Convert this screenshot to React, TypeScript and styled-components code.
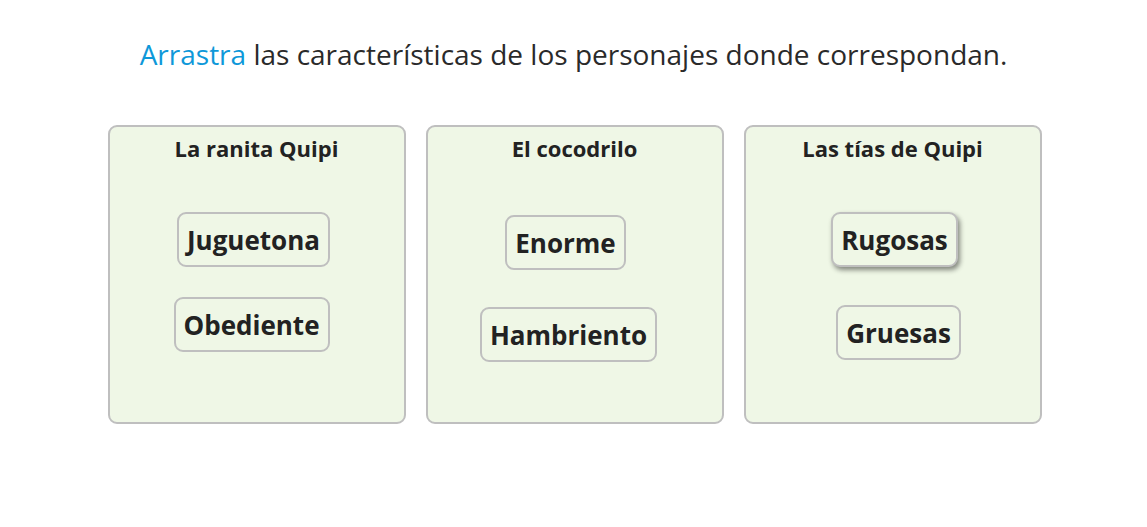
import React from "react";
import styled, { createGlobalStyle } from "styled-components";

const Global = createGlobalStyle`
  html, body { margin: 0; padding: 0; background: #ffffff; }
  body { font-family: "Open Sans", "Noto Sans", sans-serif; color: #222222; }
`;

const Page = styled.div`
  width: 1147px;
  display: flex;
  flex-direction: column;
  align-items: center;
  padding-top: 35px;
`;

const Instruction = styled.p`
  margin: 0;
  font-size: 28px;
  line-height: 38px;
  font-weight: 400;
  color: #2a2a2a;
  letter-spacing: 0;
`;

const Accent = styled.span`
  color: #0e98d9;
`;

const Board = styled.div`
  display: flex;
  gap: 20px;
  margin-top: 52px;
  margin-left: 2px;
`;

const Zone = styled.div`
  box-sizing: border-box;
  width: 298px;
  height: 299px;
  border: 2px solid #bfbfbf;
  border-radius: 9px;
  background: #eff7e6;
  display: flex;
  flex-direction: column;
  align-items: center;
`;

const ZoneTitle = styled.h3`
  margin: 7px 0 0;
  font-size: 22px;
  line-height: 28px;
  font-weight: 700;
  color: #222222;
`;

const ChipStack = styled.div`
  display: flex;
  flex-direction: column;
  align-items: center;
  width: 100%;
`;

const Chip = styled.div<{ $mt: number; $dx: number; $lift?: boolean }>`
  box-sizing: border-box;
  height: 55px;
  margin-top: ${(p) => p.$mt}px;
  transform: translateX(${(p) => p.$dx}px);
  padding: 0 8px;
  display: flex;
  align-items: center;
  border: 2px solid #bfbfbf;
  border-radius: 9px;
  background: #eff7e6;
  font-size: 26px;
  font-weight: 700;
  color: #222222;
  box-shadow: ${(p) => (p.$lift ? "2px 3px 5px rgba(0,0,0,0.45)" : "none")};
`;

type ChipData = { label: string; mt: number; dx: number; lift?: boolean };
type ZoneData = { title: string; chips: ChipData[] };

const zones: ZoneData[] = [
  {
    title: "La ranita Quipi",
    chips: [
      { label: "Juguetona", mt: 50, dx: -3 },
      { label: "Obediente", mt: 30, dx: -5 },
    ],
  },
  {
    title: "El cocodrilo",
    chips: [
      { label: "Enorme", mt: 53, dx: -9 },
      { label: "Hambriento", mt: 37, dx: -6 },
    ],
  },
  {
    title: "Las tías de Quipi",
    chips: [
      { label: "Rugosas", mt: 50, dx: 2, lift: true },
      { label: "Gruesas", mt: 38, dx: 6 },
    ],
  },
];

export default function App() {
  return (
    <>
      <Global />
      <Page>
        <Instruction>
          <Accent>Arrastra</Accent> las características de los personajes donde correspondan.
        </Instruction>
        <Board>
          {zones.map((z) => (
            <Zone key={z.title}>
              <ZoneTitle>{z.title}</ZoneTitle>
              <ChipStack>
                {z.chips.map((c) => (
                  <Chip key={c.label} $mt={c.mt} $dx={c.dx} $lift={c.lift}>
                    {c.label}
                  </Chip>
                ))}
              </ChipStack>
            </Zone>
          ))}
        </Board>
      </Page>
    </>
  );
}
